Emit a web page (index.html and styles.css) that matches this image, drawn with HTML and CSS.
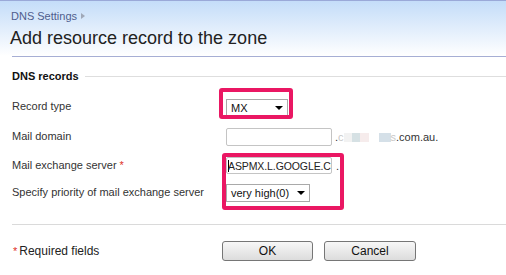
FILE: index.html
```html
<!DOCTYPE html>
<html>
<head>
<meta charset="utf-8">
<link rel="stylesheet" href="styles.css">
</head>
<body>
<div class="page">
  <div class="header">
    <div class="crumb">DNS Settings <span class="crumb-arrow"></span></div>
    <h1 class="title">Add resource record to the zone</h1>
  </div>
  <div class="content">
    <div class="header-line"></div>
    <div class="legend"><span class="legend-text">DNS records</span><span class="legend-line"></span></div>
    <div class="form">
      <div class="label">Record type</div>
      <div class="control">
        <div class="select select-type"><span>MX</span><span class="arrow"></span></div>
      </div>
      <div class="label">Mail domain</div>
      <div class="control">
        <div class="input input-domain"></div>
        <span class="suffix">.<span class="faint">c</span><span class="blur b1"></span><span class="blur b2"></span><span class="blur b3"></span><span class="blur b4"></span><span class="blur b5"></span><span class="faint">s</span>.com.au.</span>
      </div>
      <div class="label">Mail exchange server <span class="req">*</span></div>
      <div class="control">
        <div class="input input-mx"><span class="caret"></span><span class="mx-text">ASPMX.L.GOOGLE.COM</span></div>
        <span class="suffix dot">.</span>
      </div>
      <div class="label">Specify priority of mail exchange server</div>
      <div class="control">
        <div class="select select-prio"><span>very high(0)</span><span class="arrow"></span></div>
      </div>
    </div>
    <div class="sep"></div>
    <div class="footer">
      <div class="req-note"><span class="req">*</span>Required fields</div>
      <button class="btn btn-ok">OK</button>
      <button class="btn btn-cancel">Cancel</button>
    </div>
  </div>
  <div class="mark mark-type"></div>
  <div class="mark mark-mx"></div>
</div>
</body>
</html>
```
FILE: styles.css
```css
* { box-sizing: border-box; }
html, body { margin: 0; padding: 0; background: #fff; }
body { font-family: "Liberation Sans", Arial, sans-serif; color: #333; }
.page { position: relative; width: 506px; height: 275px; overflow: hidden; }

.header {
  height: 56px;
  border-top: 1px solid #9aa9d8;
  background: linear-gradient(#c4ddf9, #e4effc 55%, #ffffff);
  padding-left: 11px;
}
.crumb {
  margin-top: 8px;
  font-size: 11px;
  line-height: 14px;
  color: #4f5d8d;
  display: flex;
  align-items: center;
  gap: 4px;
}
.crumb-arrow {
  width: 0; height: 0;
  border-left: 4px solid #a0a8b8;
  border-top: 3px solid transparent;
  border-bottom: 3px solid transparent;
}
.title {
  margin: 4px 0 0 -1px;
  font-size: 18px;
  line-height: 22px;
  font-weight: normal;
  color: #222;
}

.content { padding-left: 12px; }
.header-line { height: 1px; background: #a6aed4; }

.legend {
  margin-top: 12px;
  display: flex;
  align-items: center;
  height: 14px;
}
.legend-text { font-size: 11px; font-weight: bold; color: #111; }
.legend-line { flex: 1; height: 1px; background: #dedede; margin-left: 6px; }

.form {
  margin-top: 9px;
  display: grid;
  grid-template-columns: 214px 1fr;
  grid-template-rows: 30px 30px 27px 28px;
  align-items: center;
}
.label { font-size: 11px; color: #333; padding-bottom: 2px; }
.req { color: #e0302a; }
.control { display: flex; align-items: center; font-size: 11px; }

.select {
  display: flex; align-items: center; justify-content: space-between;
  border: 1px solid #a9a9a9;
  background: #fff;
  padding: 0 4px 0 4px;
  font-size: 11px;
  color: #111;
}
.select-type { width: 62px; height: 19px; margin-top: 2px; }
.select-prio { width: 84px; height: 18px; }
.arrow {
  width: 0; height: 0;
  border-top: 4px solid #000;
  border-left: 4px solid transparent;
  border-right: 4px solid transparent;
}

.input {
  border: 1px solid #c4c4c4;
  border-radius: 2px;
  background: #fff;
  width: 106px;
  font-size: 11px;
  color: #222;
  overflow: hidden;
  white-space: nowrap;
  display: flex; align-items: center;
}
.input-domain { height: 18px; }
.input-mx { height: 17px; padding-left: 1px; }
.mx-text { flex: none; font-size: 10.5px; letter-spacing: -0.1px; }
.caret { flex: none; display: inline-block; width: 1px; height: 12px; background: #000; margin-right: -1px; }

.suffix { margin-left: 3px; color: #333; display: flex; align-items: center; }
.faint { color: #c8c8c8; }
.blur { display: inline-block; height: 9px; }
.b1 { width: 8px; background: #f2f2f2; }
.b2 { width: 8px; background: #d6e1e4; }
.b3 { width: 9px; background: #f6ecec; }
.b4 { width: 10px; background: #ffffff; }
.b5 { width: 12px; background: #d5e0e8; }
.dot { margin-left: 4px; }

.sep { margin-top: 17px; height: 1px; background: #dadada; }

.footer { margin-top: 16px; display: flex; align-items: center; }
.req-note { width: 210px; font-size: 12px; color: #222; display: flex; align-items: center; }
.req-note .req { font-size: 11px; margin-right: 2px; margin-left: 1px; }
.btn {
  height: 20px;
  border: 1px solid #767676;
  border-radius: 3px;
  background: linear-gradient(#f7f7f7, #dcdcdc);
  font-family: "Liberation Sans", Arial, sans-serif;
  font-size: 12px;
  color: #111;
  padding: 0;
}
.btn-ok { width: 91px; }
.btn-cancel { width: 92px; margin-left: 11px; }

.mark {
  position: absolute;
  border: 4px solid #ea1763;
  border-radius: 3px;
  pointer-events: none;
}
.mark-type { left: 219px; top: 88px; width: 74px; height: 31px; }
.mark-mx { left: 222px; top: 153px; width: 122px; height: 57px; }
```
